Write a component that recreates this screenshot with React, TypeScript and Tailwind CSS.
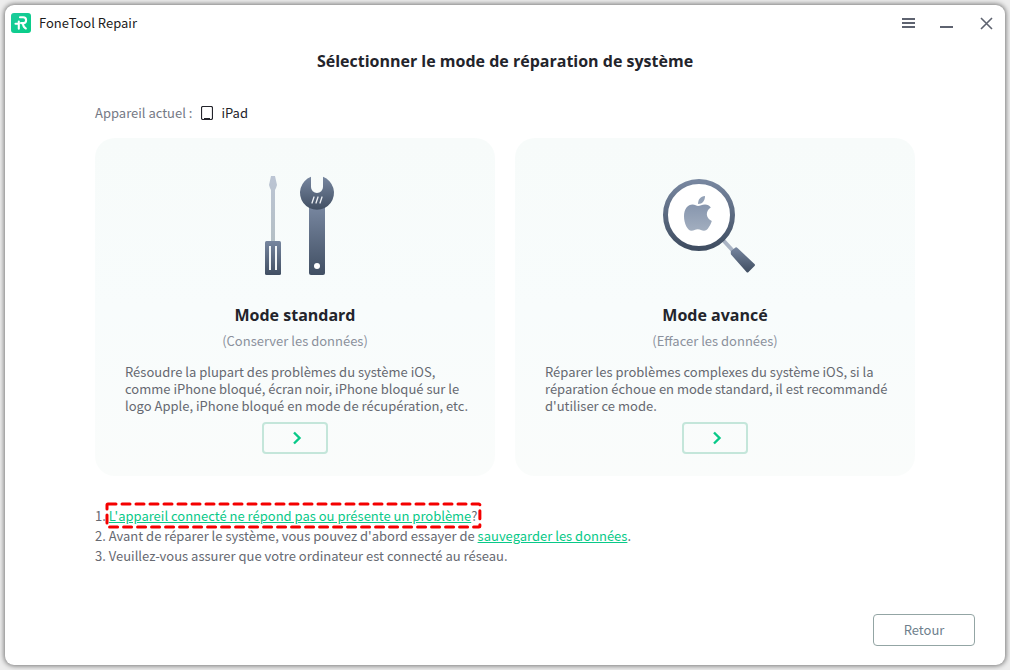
import React from 'react';

interface ModeCardProps {
  title: string;
  subtitle: string;
  description: string;
  illustration: React.ReactNode;
}

function Logo() {
  return (
    <svg viewBox="0 0 20 20" className="h-5 w-5" fill="none">
      <defs>
        <linearGradient id="logo" x1="0" y1="0" x2="1" y2="1">
          <stop offset="0" stopColor="#1ccb9c" />
          <stop offset="1" stopColor="#06cd86" />
        </linearGradient>
      </defs>
      <rect width="20" height="20" rx="3" fill="url(#logo)" />
      <path
        d="M9 4.300h3.200a2.900 2.900 0 0 1 0 5.800H10M4.500 10.800h3.500M7.800 8.500v7.300M12 11.200q.5 3.300 2.800 4.300"
        stroke="#fff"
        strokeWidth="2.1"
        strokeLinecap="round"
        strokeLinejoin="round"
      />
    </svg>
  );
}

function ToolsIllustration() {
  return (
    <svg viewBox="-5 0 110 120" className="h-[120px] w-[110px]">
      <defs>
        <linearGradient id="shaft" x1="0" y1="0" x2="0" y2="1">
          <stop offset="0" stopColor="#bcc5d4" />
          <stop offset="1" stopColor="#b4bfc5" />
        </linearGradient>
        <linearGradient id="steel" x1="0" y1="0" x2="0" y2="1">
          <stop offset="0" stopColor="#77869f" />
          <stop offset="1" stopColor="#414f63" />
        </linearGradient>
      </defs>
      <g transform="translate(5 -1)">
        <path d="M21 11h4l2 9-1 3-1 2v52h-4V25l-1-2-1-3z" fill="url(#shaft)" />
        <rect x="15" y="76" width="16" height="34" rx="1.5" fill="url(#steel)" />
        <path d="M20 81v24M26 81v24" stroke="#f3f6f7" strokeWidth="2" />
        <path d="M59 42h16v66q0 2-2 2H61q-2 0-2-2z" fill="url(#steel)" />
        <path d="M61 11.8V22a6 6 0 0 0 12 0V11.8A17 17 0 1 1 61 11.8z" fill="url(#steel)" />
        <path
          d="M64 32l-2 6M68 32l-2 6M72 32l-2 6"
          stroke="#eef1f5"
          strokeWidth="1.3"
          strokeLinecap="round"
        />
        <circle cx="67" cy="101" r="3" fill="#fff" />
      </g>
    </svg>
  );
}

function MagnifierIllustration() {
  return (
    <svg viewBox="5 1 120 120" className="h-[120px] w-[120px]">
      <defs>
        <linearGradient id="ring" x1="0" y1="0" x2="0" y2="1">
          <stop offset="0" stopColor="#77869f" />
          <stop offset="1" stopColor="#3f4d61" />
        </linearGradient>
        <linearGradient id="apple" x1="0" y1="0" x2="0" y2="1">
          <stop offset="0" stopColor="#8796ae" />
          <stop offset="1" stopColor="#a2aebf" />
        </linearGradient>
      </defs>
      <path d="M73 75l11 12" stroke="#aab4c4" strokeWidth="4" />
      <path
        d="M81 86l4.500-3.500q1-.5 2 .5l17 16q1 1 0 2l-6 6q-1 1-2 0l-15.500-17.500q-.5-2 0-3.500z"
        fill="url(#ring)"
      />
      <circle cx="49" cy="50" r="33.500" fill="#fff" stroke="url(#ring)" strokeWidth="5" />
      <path d="M48 39c0-4.500 2.500-7.500 7-8c0 4.500-2.500 8-7 8z" fill="#93a1b6" />
      <path
        d="M48 41c2 0 4-1.500 7-1.500c2.500 0 4.500 1.200 5.800 3c-5.800 3.500-5 11 1 13.500c-1.500 4.500-4.300 9.800-7.800 9.800c-2.500 0-3.500-1.500-6.200-1.500s-3.800 1.500-6.300 1.500c-4 0-7.500-7.300-7.500-14.500c0-7.500 4-11.800 8.500-11.800c2.500 0 4 1.500 5.500 1.500z"
        fill="url(#apple)"
      />
    </svg>
  );
}

function ModeCard({ title, subtitle, description, illustration }: ModeCardProps) {
  return (
    <section className="flex flex-1 flex-col items-center rounded-[20px] bg-linear-to-b from-[#f7fbfa] via-[#f8fcfc] to-[#fafcfb] pt-7 pb-[22px]">
      {illustration}
      <h2 className="mt-[17px] font-['Open_Sans',sans-serif] text-base leading-6 font-bold text-[#23242b]">
        {title}
      </h2>
      <p className="mt-1 text-[13px] leading-5 text-[#8b919c]">{subtitle}</p>
      <p className="mt-3 w-full pr-4 pl-[30px] text-[13px] leading-[17px] text-[#666971]">
        {description}
      </p>
      <button
        type="button"
        aria-label={title}
        className="mt-2 flex h-8 w-[66px] items-center justify-center rounded border-2 border-[#c4e6da] hover:bg-emerald-50"
      >
        <svg viewBox="0 0 10 14" className="ml-[3px] h-[14px] w-[10px]" fill="none">
          <path d="M2 1.500L7.500 7L2 12.500" stroke="#08c988" strokeWidth="2.4" />
        </svg>
      </button>
    </section>
  );
}

export default function App() {
  return (
    <div className="flex min-h-screen bg-[#ededed] p-[5px] font-['Noto_Sans_CJK_SC',sans-serif] text-[13px]">
      <div className="flex flex-1 flex-col rounded-[9px] bg-white shadow-[0_0_5px_1px_rgba(0,0,0,0.5)]">
        <header className="flex h-9 items-center justify-between pr-3 pl-[6px]">
          <div className="flex items-center gap-2 text-[#1b1b1b]">
            <Logo />
            <span>FoneTool Repair</span>
          </div>
          <div className="flex items-center gap-[25px] text-[#5e6370]">
            <button type="button" aria-label="Menu">
              <svg viewBox="0 0 14 14" className="h-[14px] w-[14px]" stroke="currentColor" strokeWidth="2">
                <path d="M1 3h13M1 7h13M1 11h13" />
              </svg>
            </button>
            <button type="button" aria-label="Réduire">
              <svg viewBox="0 0 14 14" className="h-[14px] w-[14px]" stroke="currentColor" strokeWidth="2">
                <path d="M0 11h13" />
              </svg>
            </button>
            <button type="button" aria-label="Fermer">
              <svg viewBox="0 0 14 14" className="h-[14px] w-[14px]" stroke="currentColor" strokeWidth="1.6">
                <path d="M2 2l11 11M13 2L2 13" />
              </svg>
            </button>
          </div>
        </header>

        <main className="flex flex-1 flex-col">
          <h1 className="mt-2 text-center font-['Open_Sans',sans-serif] text-base leading-6 font-bold text-[#23242b]">
            Sélectionner le mode de réparation de système
          </h1>

          <div className="mt-[30px] flex items-center px-[90px] leading-5">
            <span className="text-[#757985]">Appareil actuel :</span>
            <svg viewBox="0 0 12 14" className="mr-2 ml-[9px] h-[14px] w-3" fill="none" stroke="#23242b">
              <rect x="0.500" y="0.500" width="11" height="13" rx="1.500" strokeWidth="1.200" />
              <path d="M3 12.500h6" />
            </svg>
            <span className="text-[#23242b]">iPad</span>
          </div>

          <div className="mt-[15px] flex gap-5 px-[90px]">
            <ModeCard
              title="Mode standard"
              subtitle="(Conserver les données)"
              description="Résoudre la plupart des problèmes du système iOS, comme iPhone bloqué, écran noir, iPhone bloqué sur le logo Apple, iPhone bloqué en mode de récupération, etc."
              illustration={<ToolsIllustration />}
            />
            <ModeCard
              title="Mode avancé"
              subtitle="(Effacer les données)"
              description="Réparer les problèmes complexes du système iOS, si la réparation échoue en mode standard, il est recommandé d'utiliser ce mode."
              illustration={<MagnifierIllustration />}
            />
          </div>

          <ol className="mt-[30px] px-[90px] leading-5 text-[#666971]">
            <li>
              1.{' '}
              <span className="relative inline-block">
                <a href="#aide" className="text-[#08c988] underline">
                  L'appareil connecté ne répond pas ou présente un problème
                </a>
                ?
                <svg className="pointer-events-none absolute -inset-x-1 -top-1 h-7 w-[calc(100%+8px)] overflow-visible">
                  <rect
                    x="2"
                    y="2"
                    width="99%"
                    height="23"
                    rx="1"
                    fill="none"
                    stroke="#f40000"
                    strokeWidth="3"
                    strokeLinecap="round"
                    strokeDasharray="8 6"
                  />
                </svg>
              </span>
            </li>
            <li>
              2. Avant de réparer le système, vous pouvez d'abord essayer de{' '}
              <a href="#sauvegarde" className="text-[#08c988] underline">
                sauvegarder les données
              </a>
              .
            </li>
            <li>3. Veuillez-vous assurer que votre ordinateur est connecté au réseau.</li>
          </ol>

          <footer className="mt-auto flex justify-end px-[30px] pb-[19px]">
            <button
              type="button"
              className="h-8 w-[102px] rounded border border-[#93a5a4] text-[#6f7f8d] hover:bg-gray-50"
            >
              Retour
            </button>
          </footer>
        </main>
      </div>
    </div>
  );
}
